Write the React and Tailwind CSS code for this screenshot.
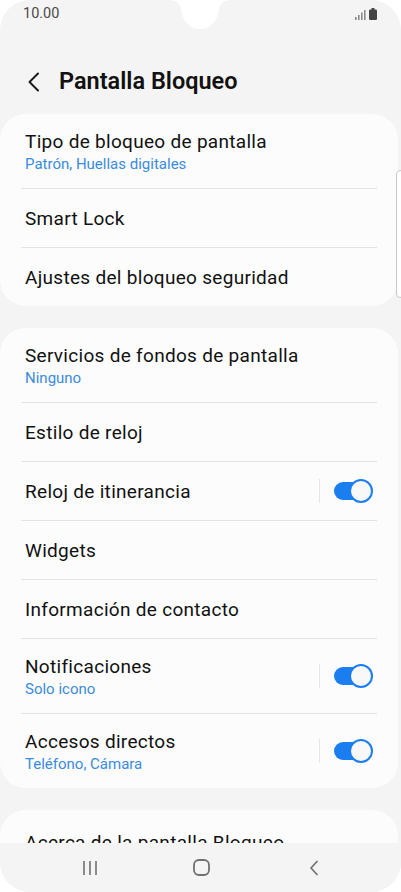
import React from 'react';

const Toggle = () => (
  <div className="flex items-center">
    <div className="h-[24px] w-px bg-[#e6e6e6] mr-[14px]" />
    <div className="relative h-[18px] w-[38px] rounded-full bg-[#1a7ef0]">
      <div className="absolute right-[-1px] top-[-3px] h-[24px] w-[24px] rounded-full border-[2px] border-[#1a7ef0] bg-[#f8f8f8]" />
    </div>
  </div>
);

const Row = ({ title, sub, toggle, last }) => (
  <div className="relative">
    <div className={`flex items-center justify-between pl-[25px] pr-[26px] ${sub ? 'h-[74px]' : 'h-[58px]'}`}>
      <div className="flex flex-col">
        <span className="text-[19px] leading-[25px] tracking-[0.3px] text-[#111]">{title}</span>
        {sub && <span className="text-[15px] leading-[20px] text-[#3a8be0]">{sub}</span>}
      </div>
      {toggle && <Toggle />}
    </div>
    {!last && <div className="mx-[21px] h-px bg-[#e4e4e4]" />}
  </div>
);

const Card = ({ children }) => (
  <div className="mr-[3px] rounded-[26px] bg-[#fcfcfc]">{children}</div>
);

export default function App() {
  return (
    <div
      className="relative h-[892px] w-[401px] overflow-hidden bg-white"
      style={{ fontFamily: 'Roboto, "Noto Sans", sans-serif' }}
    >
      <div className="flex h-full flex-col overflow-hidden rounded-[30px] bg-[#f4f4f4]">
        {/* status bar */}
        <div className="relative flex h-[28px] shrink-0 items-center justify-between pl-[23px] pr-[24px]">
          <span className="text-[14.5px] text-[#4a4a4a]">10.00</span>
          <div className="flex items-end gap-[3px]">
            <svg width="11" height="10" viewBox="0 0 11 10">
              <rect x="0" y="7" width="1.6" height="3" fill="#8a8a8a" />
              <rect x="3" y="5" width="1.6" height="5" fill="#8a8a8a" />
              <rect x="6" y="2.5" width="1.6" height="7.5" fill="#8a8a8a" />
              <rect x="9" y="0" width="1.6" height="10" fill="#8a8a8a" />
            </svg>
            <svg width="8" height="12" viewBox="0 0 8 12">
              <rect x="2.5" y="0" width="3" height="2" rx="0.5" fill="#444" />
              <rect x="0" y="1.5" width="8" height="10.5" rx="1.2" fill="#444" />
            </svg>
          </div>
          <div className="absolute left-[168px] top-0 h-[30px] w-[64px]">
            <svg width="64" height="30" viewBox="0 0 64 30">
              <path d="M0 0 C10 0 12 4 13 10 C15 22 22 29 32 29 C42 29 49 22 51 10 C52 4 54 0 64 0 Z" fill="#fff" />
            </svg>
          </div>
        </div>

        {/* header */}
        <div className="flex h-[86px] shrink-0 items-center pt-[21px]">
          <svg className="ml-[27px]" width="13" height="20" viewBox="0 0 13 20">
            <path d="M11 1.5 L2.5 10 L11 18.5" fill="none" stroke="#1a1a1a" strokeWidth="2" strokeLinecap="round" strokeLinejoin="round" />
          </svg>
          <span className="ml-[19px] text-[23.5px] font-semibold text-[#111]">Pantalla Bloqueo</span>
        </div>

        {/* content */}
        <div className="relative flex-1 overflow-hidden">
          <div className="flex flex-col gap-[22px]">
            <Card>
              <Row title="Tipo de bloqueo de pantalla" sub="Patrón, Huellas digitales" />
              <Row title="Smart Lock" />
              <Row title="Ajustes del bloqueo seguridad" last />
            </Card>
            <Card>
              <Row title="Servicios de fondos de pantalla" sub="Ninguno" />
              <Row title="Estilo de reloj" />
              <Row title="Reloj de itinerancia" toggle />
              <Row title="Widgets" />
              <Row title="Información de contacto" />
              <Row title="Notificaciones" sub="Solo icono" toggle />
              <Row title="Accesos directos" sub="Teléfono, Cámara" toggle last />
            </Card>
            <Card>
              <div className="pl-[25px] pt-[20px] pb-[20px] text-[19px] leading-[25px] tracking-[0.3px] text-[#111]">
                Acerca de la pantalla Bloqueo
              </div>
            </Card>
          </div>
          <div className="absolute right-[-3px] top-[56px] h-[128px] w-[8px] rounded-[4px] border border-[#c8c8c8] bg-white" />
        </div>

        {/* nav bar */}
        <div className="flex h-[49px] shrink-0 items-center bg-[#f4f4f4] pl-[82px]">
          <svg width="16" height="16" viewBox="0 0 16 16">
            <path d="M2 1 V15 M8 1 V15 M14 1 V15" stroke="#707070" strokeWidth="1.6" />
          </svg>
          <svg className="ml-[95px]" width="17" height="17" viewBox="0 0 17 17">
            <rect x="1" y="1" width="15" height="15" rx="5" fill="none" stroke="#707070" strokeWidth="1.8" />
          </svg>
          <svg className="ml-[99px]" width="10" height="16" viewBox="0 0 10 16">
            <path d="M8 1.5 L2 8 L8 14.5" fill="none" stroke="#707070" strokeWidth="1.7" strokeLinecap="round" strokeLinejoin="round" />
          </svg>
        </div>
      </div>
    </div>
  );
}
